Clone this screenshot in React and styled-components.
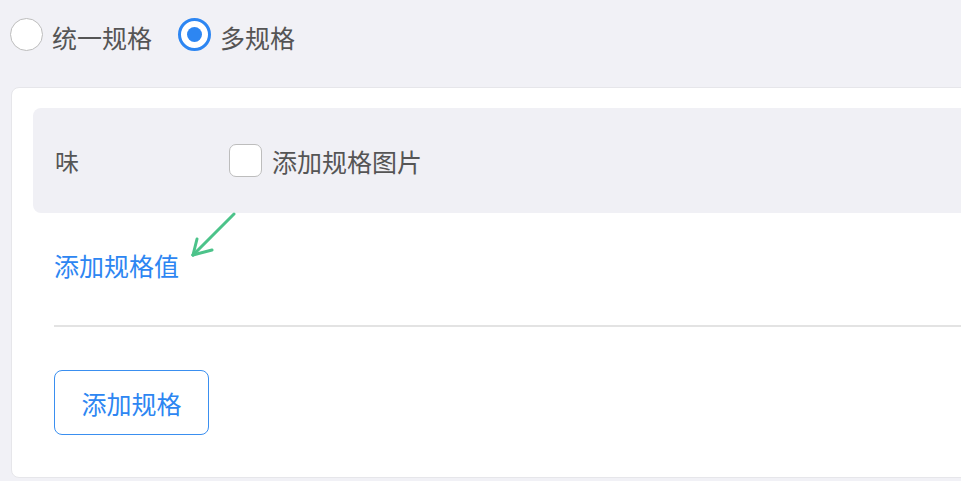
import React from "react";
import styled, { createGlobalStyle } from "styled-components";

const GlobalStyle = createGlobalStyle`
  body {
    margin: 0;
    background: #f1f1f6;
    font-family: "Noto Sans CJK SC", "Noto Sans", sans-serif;
    overflow: hidden;
  }
`;

const Page = styled.div`
  position: relative;
  width: 961px;
  height: 481px;
  overflow: hidden;
`;

const RadioRow = styled.div`
  display: flex;
  align-items: center;
  box-sizing: border-box;
  height: 75px;
  padding: 0 0 6px 10px;
  gap: 26px;
`;

const RadioOption = styled.label`
  display: flex;
  align-items: center;
  gap: 9px;
  font-size: 25px;
  color: #555;
  & > span:last-child {
    position: relative;
    top: 2px;
  }
`;

const RadioCircle = styled.span`
  box-sizing: border-box;
  width: 33px;
  height: 33px;
  border-radius: 50%;
  background: #fff;
  border: ${(p) => (p.checked ? "3px solid #2d86f2" : "1px solid #bdbdbd")};
  display: flex;
  align-items: center;
  justify-content: center;
  &::after {
    content: "";
    display: ${(p) => (p.checked ? "block" : "none")};
    width: 15px;
    height: 15px;
    border-radius: 50%;
    background: #2d86f2;
  }
`;

const Card = styled.div`
  margin: 12px 0 0 11px;
  width: 1000px;
  height: 391px;
  box-sizing: border-box;
  background: #fff;
  border: 1px solid #e6e6ea;
  border-radius: 8px;
  padding: 20px 0 0 21px;
`;

const SpecBox = styled.div`
  display: flex;
  align-items: center;
  height: 105px;
  background: #f0f0f5;
  border-radius: 8px;
  padding-left: 22px;
`;

const SpecName = styled.span`
  width: 174px;
  font-size: 24px;
  color: #555;
`;

const CheckLabel = styled.label`
  display: flex;
  align-items: center;
  gap: 10px;
  font-size: 25px;
  color: #555;
`;

const CheckBox = styled.span`
  box-sizing: border-box;
  width: 33px;
  height: 33px;
  border-radius: 7px;
  border: 1px solid #bdbdbd;
  background: #fff;
`;

const Body = styled.div`
  padding-left: 21px;
`;

const LinkText = styled.div`
  font-size: 25px;
  color: #2d86f2;
  height: 112px;
  display: flex;
  align-items: center;
  padding-bottom: 8px;
  box-sizing: border-box;
`;

const Divider = styled.div`
  height: 2px;
  background: #e3e3e3;
`;

const AddButton = styled.button`
  margin-top: 43px;
  width: 155px;
  height: 65px;
  border: 1px solid #3a8ff0;
  border-radius: 8px;
  background: #fff;
  color: #2d86f2;
  font-family: inherit;
  font-size: 25px;
`;

const Arrow = styled.svg`
  position: absolute;
  left: 185px;
  top: 208px;
`;

export default function App() {
  return (
    <Page>
      <GlobalStyle />
      <RadioRow>
        <RadioOption>
          <RadioCircle />
          <span>统一规格</span>
        </RadioOption>
        <RadioOption>
          <RadioCircle checked />
          <span>多规格</span>
        </RadioOption>
      </RadioRow>
      <Card>
        <SpecBox>
          <SpecName>味</SpecName>
          <CheckLabel>
            <CheckBox />
            添加规格图片
          </CheckLabel>
        </SpecBox>
        <Body>
          <LinkText>添加规格值</LinkText>
          <Divider />
          <AddButton>添加规格</AddButton>
        </Body>
      </Card>
      <Arrow width="56" height="56" viewBox="0 0 56 56">
        <g stroke="#4cc38a" strokeWidth="3" strokeLinecap="round" fill="none">
          <line x1="49" y1="6" x2="8" y2="47" />
          <line x1="8" y1="47" x2="12" y2="31" />
          <line x1="8" y1="47" x2="27" y2="42" />
        </g>
      </Arrow>
    </Page>
  );
}
